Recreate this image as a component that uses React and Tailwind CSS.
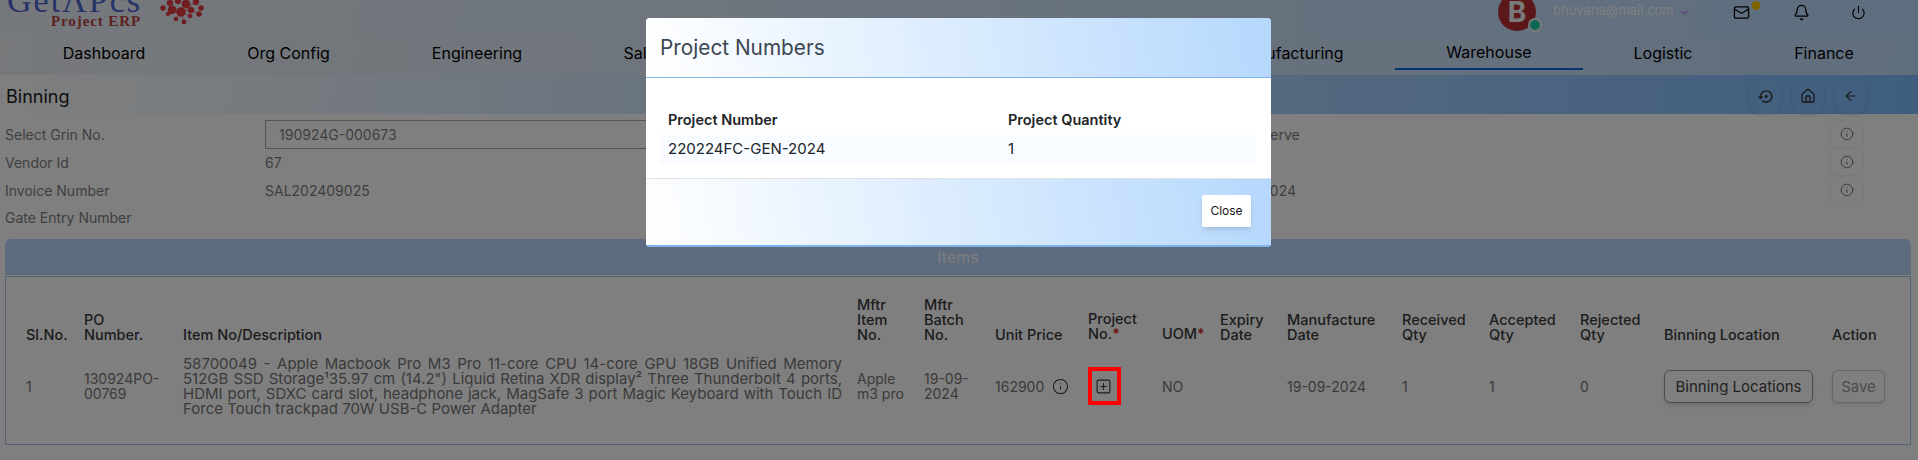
import React from "react";
import { ChevronDown, Mail, Bell, Power, House, ArrowLeft, Info, SquarePlus } from "lucide-react";

const navItems = [
  ["Dashboard", "w-[184px]"],
  ["Org Config", "w-[185px]"],
  ["Engineering", "w-[192px]"],
  ["Sales", "w-[142px]"],
  ["Purchase", "w-[215px]"],
  ["Stores", "w-[252px]"],
  ["Manufacturing", "w-[213px]"],
  ["Warehouse", "w-[188px]"],
  ["Logistic", "w-[160px]"],
  ["Finance", "w-[162px]"],
];

const headers = [
  ["Sl.No.", "w-[58px]"],
  [<>PO<br />Number.</>, "w-[99px]"],
  ["Item No/Description", "w-[674px]"],
  [<>Mftr<br />Item<br />No.</>, "w-[67px]"],
  [<>Mftr<br />Batch<br />No.</>, "w-[71px]"],
  ["Unit Price", "w-[93px]"],
  [<span className="relative top-[-1px] block">Project<br />No.<span className="text-[#d11a1a]">*</span></span>, "w-[74px]"],
  [<span className="relative top-[-1px] block">UOM<span className="text-[#d11a1a]">*</span></span>, "w-[58px]"],
  [<>Expiry<br />Date</>, "w-[67px]"],
  [<>Manufacture<br />Date</>, "w-[115px]"],
  [<>Received<br />Qty</>, "w-[87px]"],
  [<>Accepted<br />Qty</>, "w-[91px]"],
  [<>Rejected<br />Qty</>, "w-[84px]"],
  ["Binning Location", "w-[168px]"],
  ["Action", "w-[68px]"],
];

function Logo() {
  const dots = [
    [170, 3, 3], [178, 1, 3], [186, 4, 4], [196, 2, 3], [201, 8, 2.5], [163, 8, 2.5], [172, 10, 4],
    [181, 12, 4.5], [191, 10, 3], [199, 14, 2.5], [168, 14, 2], [176, 19, 2], [184, 22, 2.2], [190, 16, 2],
  ];
  return (
    <div className="flex items-start w-[220px] h-[48px]">
      <div className="flex flex-col items-end w-[142px] -mt-[2px]">
        <span className="font-['Liberation_Serif',serif] text-[34px] leading-[30px] tracking-[2px] text-[#4f66d0] whitespace-nowrap">GetΛPcs</span>
        <span className="font-['Liberation_Serif',serif] text-[15px] leading-[16px] tracking-[0.9px] font-bold text-[#b84444] -mt-[3px] mr-[1px] whitespace-nowrap">Project ERP</span>
      </div>
      <svg width="220" height="24" viewBox="0 0 220 24" className="ml-[-142px] mt-[12px] shrink-0" fill="#e03a3f" stroke="#e03a3f" strokeWidth="0.6">
        <path d="M170 3 L181 12 L196 2 M172 10 L181 12 L191 10 L199 14 M181 12 L176 19 M181 12 L184 22 M186 4 L181 12 M190 16 L181 12" fill="none" />
        {dots.map(([x, y, r], i) => <circle key={i} cx={x} cy={y} r={r} />)}
      </svg>
    </div>
  );
}

function InfoBox() {
  return (
    <div className="flex items-center justify-center w-[34px] h-[27px] rounded-[4px] border border-[#f2f2f2] bg-white">
      <Info className="w-[14px] h-[14px] text-[#666]" strokeWidth={1.5} />
    </div>
  );
}

function RoundBtn({ children }) {
  return (
    <div className="flex items-center justify-center w-[32px] h-[35px] rounded-[10px] shadow-sm">
      {children}
    </div>
  );
}

function FormRow({ label, value, right, rightPl = "pl-[626px]", h, input, info = true }) {
  return (
    <div className={"flex items-center " + h}>
      <div className="w-[260px] pl-[5px] text-[#7e7e7e]">{label}</div>
      <div className="w-[360px] pl-[5px] text-[#7e7e7e]">
        {input ? (
          <div className="flex items-center h-[29px] w-[400px] pl-[13px] border border-[#aaa] text-[#7e7e7e]">{value}</div>
        ) : value}
      </div>
      <div className={"w-[1210px] text-[#7e7e7e] " + rightPl}>{right}</div>
      {info && <InfoBox />}
    </div>
  );
}

export default function App() {
  return (
    <div className="relative h-[460px] w-[1918px] overflow-hidden bg-white font-['Inter',sans-serif] text-[14px]">
      <div className="-mt-[12px]">
        <header className="flex items-center h-[48px] bg-[linear-gradient(100deg,#edf2f8,#bcdcff)]">
          <Logo />
          <div className="flex items-center ml-auto">
            <div className="relative mr-[17px] flex items-center justify-center w-[38px] h-[38px] rounded-full bg-[#b83030] text-[#f4f4f4] font-bold text-[28px] leading-none">
              B
              <span className="absolute right-[-6px] bottom-[-1px] w-[14px] h-[14px] rounded-full bg-[#1fd0ab] border-2 border-[#f2f2f2]" />
            </div>
            <span className="text-[13px] text-white w-[126px] whitespace-nowrap -mt-[3px]">bhuvana@mail.com</span>
            <ChevronDown className="w-[11px] h-[11px] text-[#b07ce8] mr-[43px]" strokeWidth={2.2} />
            <div className="relative mr-[43px]">
              <Mail className="w-[17px] h-[17px] text-black" strokeWidth={1.8} />
              <span className="absolute top-[-3px] right-[-10px] w-[8px] h-[9px] rounded-full bg-[#ffc800]" />
            </div>
            <Bell className="w-[17px] h-[17px] text-black mr-[41px]" strokeWidth={1.8} />
            <Power className="w-[15px] h-[15px] text-black mr-[52px]" strokeWidth={1.8} />
          </div>
        </header>
        <nav className="flex items-start h-[39px] pl-[12px] bg-[linear-gradient(100deg,#eef2f7,#bfdcfb)]">
          {navItems.map(([t, w]) => (
            <div key={t} className={"flex items-center justify-center h-[34px] text-[16px] text-black " + w + (t === "Warehouse" ? " border-b-2 border-[#0a6ae0]" : "")}>
              {t}
            </div>
          ))}
        </nav>
        <div className="flex items-center justify-between h-[39px] pl-[6px] pr-[51px] bg-[linear-gradient(100deg,#ffffff,#7ebbff)]">
          <span className="text-[18px] text-[#1c1c1c] mt-[4px]">Binning</span>
          <div className="flex items-center gap-[11px] -mb-[3px]">
            <RoundBtn>
              <svg viewBox="0 0 24 24" className="w-[17px] h-[17px]" fill="#333">
                <path d="M13 3c-4.97 0-9 4.03-9 9H1l4 3.99L9 12H6c0-3.87 3.13-7 7-7s7 3.13 7 7-3.13 7-7 7c-1.93 0-3.68-.79-4.94-2.06l-1.42 1.42C8.27 19.99 10.51 21 13 21c4.97 0 9-4.03 9-9s-4.03-9-9-9z" />
                <circle cx="13" cy="12" r="2" />
              </svg>
            </RoundBtn>
            <RoundBtn><House className="w-[16px] h-[16px] text-[#333]" strokeWidth={2} /></RoundBtn>
            <RoundBtn><ArrowLeft className="w-[16px] h-[16px] text-[#333]" strokeWidth={1.6} /></RoundBtn>
          </div>
        </div>
        <section className="pt-[6px] pr-[54px]">
          <FormRow label="Select Grin No." value="190924G-000673" right="Reserve" h="h-[28px]" input />
          <FormRow label="Vendor Id" value="67" right="" h="h-[28px]" />
          <FormRow label="Invoice Number" value="SAL202409025" right="19-09-2024" rightPl="pl-[597px]" h="h-[28px]" />
          <FormRow label="Gate Entry Number" value="" right="" h="h-[26px]" info={false} />
        </section>
        <section className="mt-[9px] ml-[5px] w-[1906px]">
          <div className="flex items-center justify-center h-[36px] rounded-t-[6px] bg-[#b8d8fc] text-[16px] text-[#f8fafc]">Items</div>
          <div className="mt-[1px] h-[169px] border border-[#a9c6e8] pt-[20px]">
            <table className="table-fixed w-[1874px] ml-[20px] border-collapse text-left">
              <thead>
                <tr>
                  {headers.map(([h, w], i) => (
                    <th key={i} className={"align-bottom font-medium text-[14.5px] leading-[15px] text-[#3a3a3a] pb-[14px] " + w}>{h}</th>
                  ))}
                </tr>
              </thead>
              <tbody className="text-[#767676] leading-[15px]">
                <tr>
                  <td className="align-middle">1</td>
                  <td className="align-middle pr-[4px]">130924PO-00769</td>
                  <td className="align-middle pr-[15px] text-justify text-[15px]">58700049 - Apple Macbook Pro M3 Pro 11-core CPU 14-core GPU 18GB Unified Memory 512GB SSD Storage¹35.97 cm (14.2") Liquid Retina XDR display² Three Thunderbolt 4 ports, HDMI port, SDXC card slot, headphone jack, MagSafe 3 port Magic Keyboard with Touch ID Force Touch trackpad 70W USB-C Power Adapter</td>
                  <td className="align-middle pr-[10px]">Apple m3 pro</td>
                  <td className="align-middle pr-[10px]">19-09-2024</td>
                  <td className="align-middle">
                    <span className="flex items-center gap-[8px]">162900 <Info className="w-[17px] h-[17px] text-[#333]" strokeWidth={1.5} /></span>
                  </td>
                  <td className="align-middle">
                    <span className="relative z-50 flex items-center justify-center w-[33px] h-[38px] border-[4px] border-[#ff0000] pr-[2px]">
                      <SquarePlus className="w-[17px] h-[17px] text-[#1c1c1c]" strokeWidth={1.6} />
                    </span>
                  </td>
                  <td className="align-middle">NO</td>
                  <td />
                  <td className="align-middle">19-09-2024</td>
                  <td className="align-middle">1</td>
                  <td className="align-middle">1</td>
                  <td className="align-middle">0</td>
                  <td className="align-middle">
                    <button className="h-[33px] w-[149px] rounded-[6px] border border-[#999] bg-white text-[15px] text-[#444] shadow-md">Binning Locations</button>
                  </td>
                  <td className="align-middle">
                    <button className="h-[33px] w-[53px] rounded-[6px] border border-[#ccc] bg-white text-[15px] text-[#999] shadow-sm">Save</button>
                  </td>
                </tr>
              </tbody>
            </table>
          </div>
        </section>
      </div>

      <div className="absolute inset-0 z-40 bg-black/50" />

      <div className="absolute left-[646px] top-[18px] z-50 w-[625px] h-[229px] overflow-hidden rounded-[4px] bg-white flex flex-col">
        <div className="flex items-center h-[60px] pl-[14px] border-b border-[#7fb3ea] bg-[linear-gradient(80deg,#ffffff,#b6d8fd)]">
          <span className="text-[20.8px] text-[#3c4650]">Project Numbers</span>
        </div>
        <div className="h-[100px] pt-[34px] px-[14px]">
          <div className="grid grid-cols-[340px_255px] gap-x-[1px]">
            <div className="h-[15px] pl-[8px] mb-[8px] text-[14.5px] leading-[15px] font-semibold text-[#212529]">Project Number</div>
            <div className="h-[15px] pl-[7px] mb-[8px] text-[14.5px] leading-[15px] font-semibold text-[#212529]">Project Quantity</div>
            <div className="flex items-center h-[29px] pl-[8px] bg-[#f8fbff] text-[15px] text-[#212529]">220224FC-GEN-2024</div>
            <div className="flex items-center h-[29px] pl-[7px] bg-[#f8fbff] text-[15px] text-[#212529]">1</div>
          </div>
        </div>
        <div className="flex-1 flex items-end justify-end pr-[20px] pb-[18px] border-t border-[#dee2e6] border-b-2 border-b-[#7fb3ea] bg-[linear-gradient(80deg,#ffffff,#b6d8fd)]">
          <button className="w-[49px] h-[32px] rounded-[2px] bg-white text-[12px] text-[#111] shadow-md">Close</button>
        </div>
      </div>
    </div>
  );
}
